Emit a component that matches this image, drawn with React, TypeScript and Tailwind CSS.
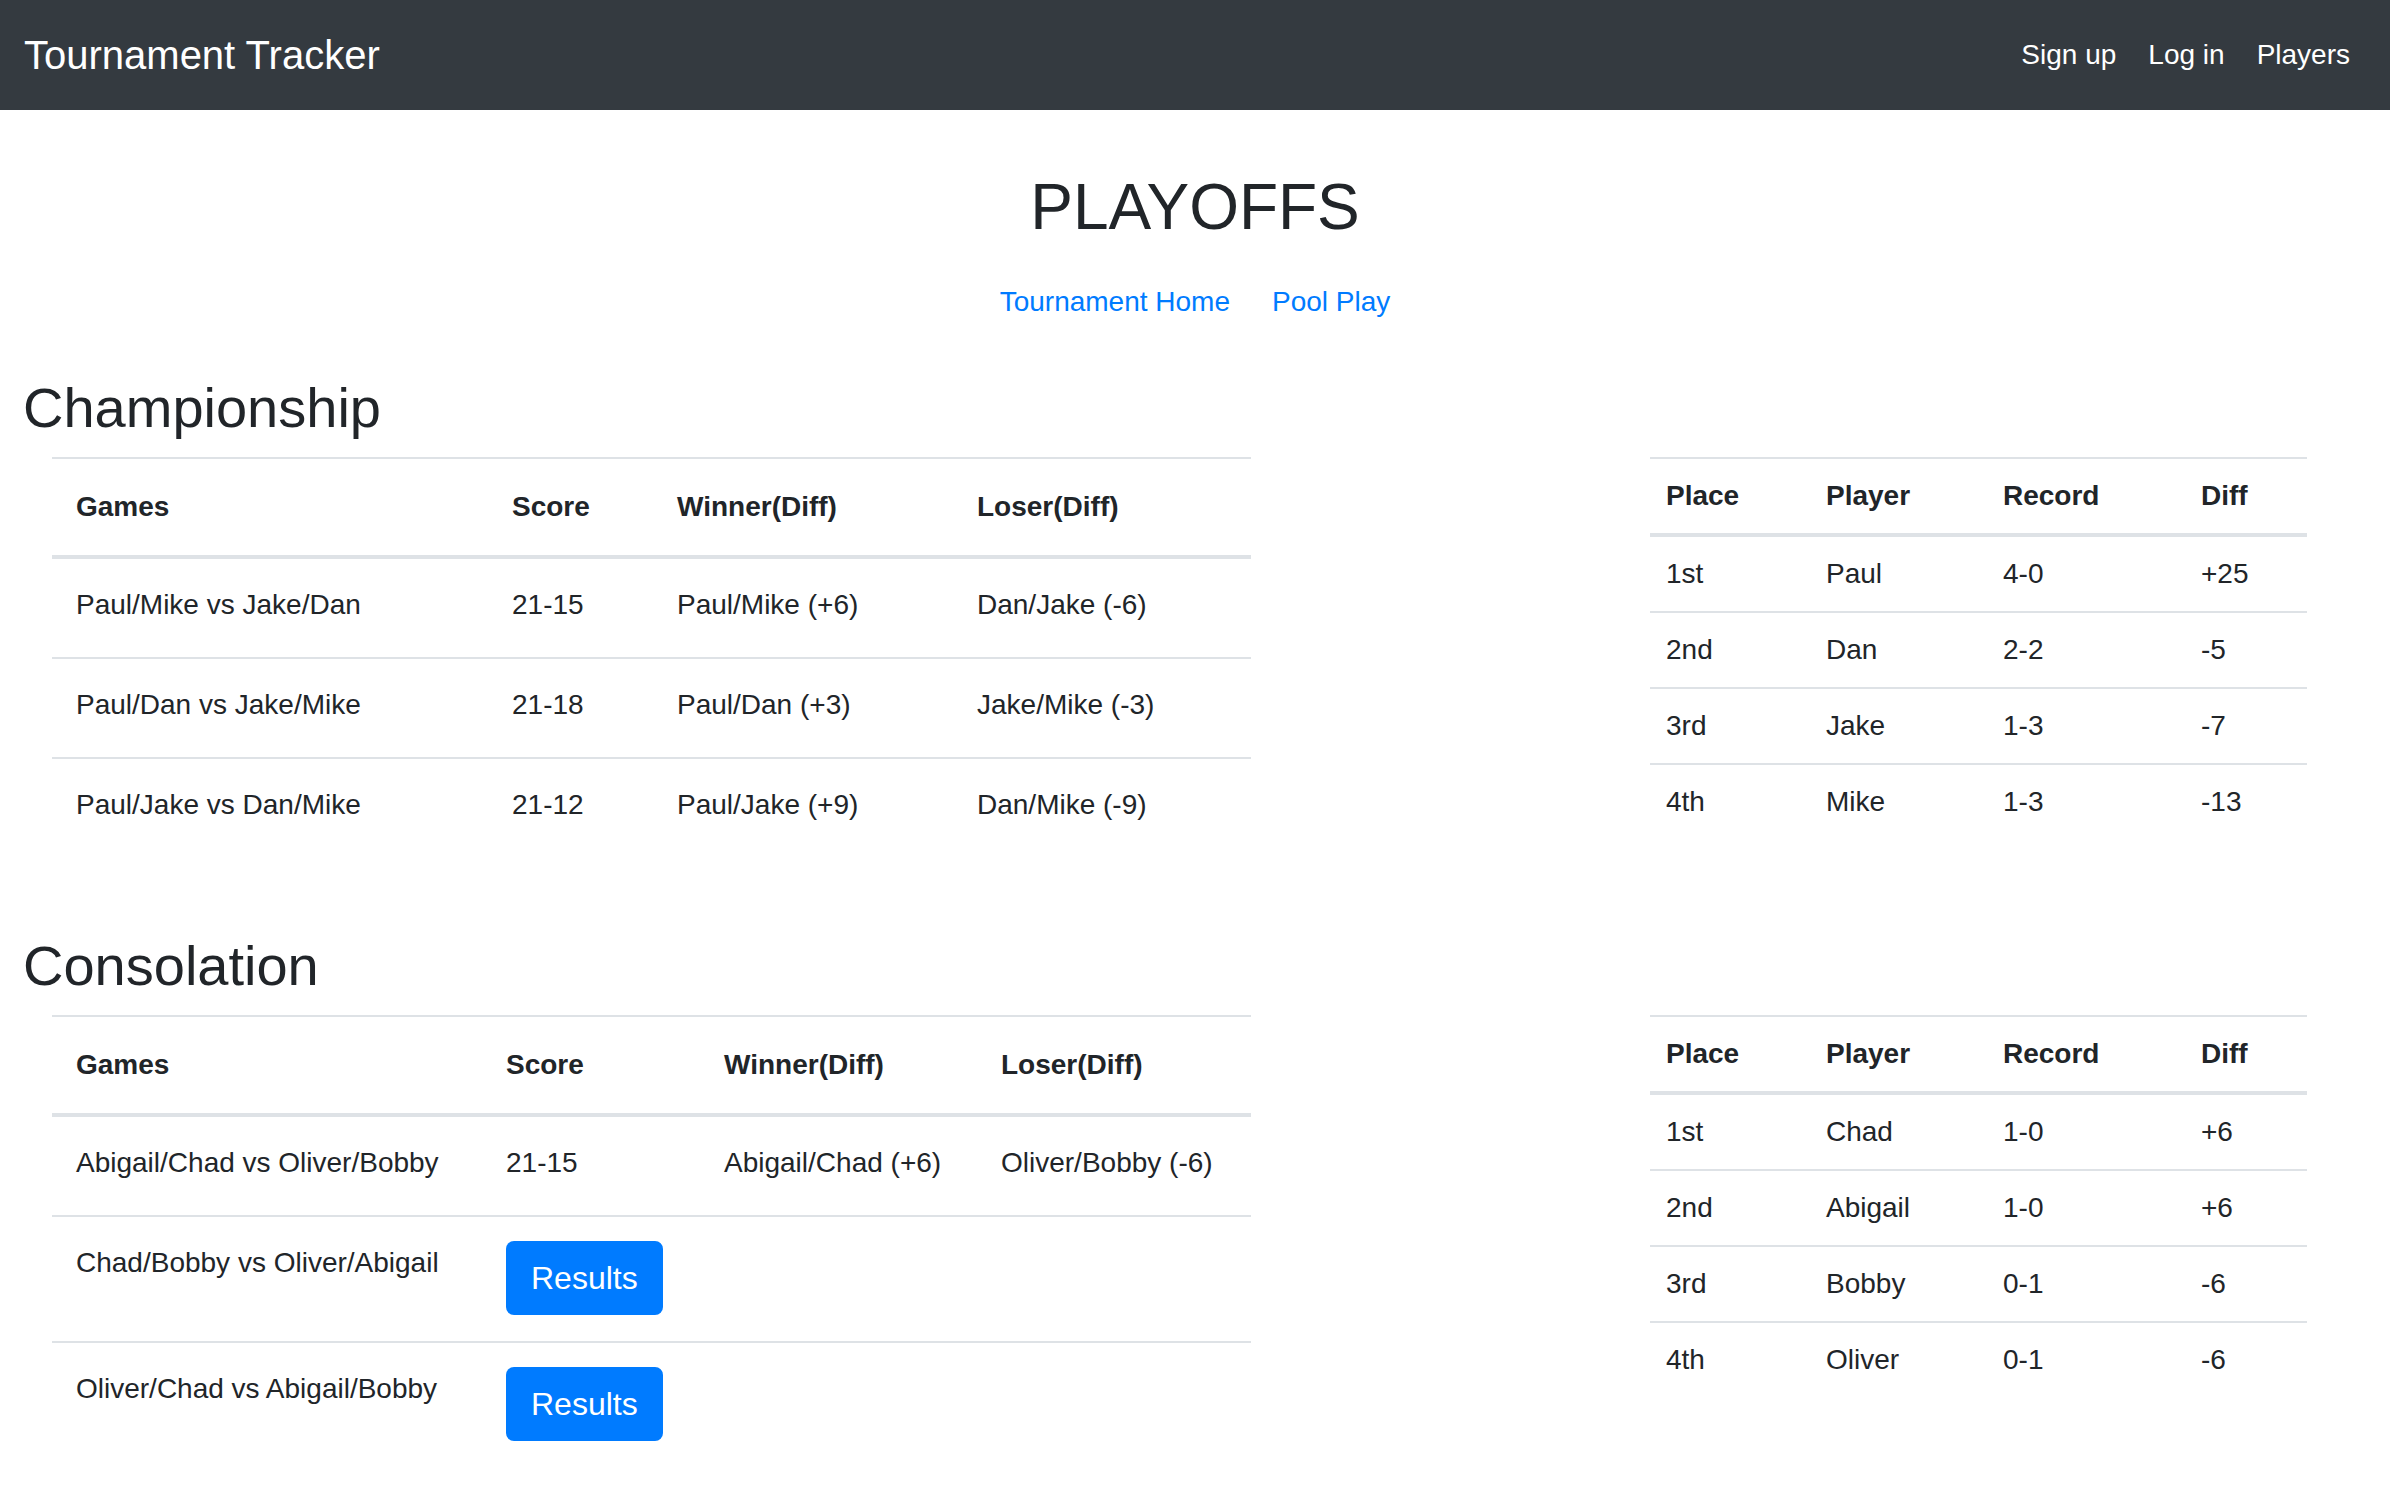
import React from "react";

type Game = { games: string; score?: string; winner?: string; loser?: string };
type Standing = { place: string; player: string; record: string; diff: string };

const championshipGames: Game[] = [
  { games: "Paul/Mike vs Jake/Dan", score: "21-15", winner: "Paul/Mike (+6)", loser: "Dan/Jake (-6)" },
  { games: "Paul/Dan vs Jake/Mike", score: "21-18", winner: "Paul/Dan (+3)", loser: "Jake/Mike (-3)" },
  { games: "Paul/Jake vs Dan/Mike", score: "21-12", winner: "Paul/Jake (+9)", loser: "Dan/Mike (-9)" },
];

const championshipStandings: Standing[] = [
  { place: "1st", player: "Paul", record: "4-0", diff: "+25" },
  { place: "2nd", player: "Dan", record: "2-2", diff: "-5" },
  { place: "3rd", player: "Jake", record: "1-3", diff: "-7" },
  { place: "4th", player: "Mike", record: "1-3", diff: "-13" },
];

const consolationGames: Game[] = [
  { games: "Abigail/Chad vs Oliver/Bobby", score: "21-15", winner: "Abigail/Chad (+6)", loser: "Oliver/Bobby (-6)" },
  { games: "Chad/Bobby vs Oliver/Abigail" },
  { games: "Oliver/Chad vs Abigail/Bobby" },
];

const consolationStandings: Standing[] = [
  { place: "1st", player: "Chad", record: "1-0", diff: "+6" },
  { place: "2nd", player: "Abigail", record: "1-0", diff: "+6" },
  { place: "3rd", player: "Bobby", record: "0-1", diff: "-6" },
  { place: "4th", player: "Oliver", record: "0-1", diff: "-6" },
];

const GamesTable = ({ rows, widths }: { rows: Game[]; widths: string[] }) => {
  const th = "text-left font-bold align-top px-[24px] py-[24px] leading-[48px] border-t-2 border-b-4 border-[#dee2e6]";
  const td = "align-top px-[24px] pt-[22px] pb-[28px] leading-[48px] border-t-2 border-[#dee2e6]";
  return (
    <table className="table-fixed w-[1199px] text-[28px]">
      <thead>
        <tr>
          <th className={`${th} ${widths[0]}`}>Games</th>
          <th className={`${th} ${widths[1]}`}>Score</th>
          <th className={`${th} ${widths[2]}`}>Winner(Diff)</th>
          <th className={`${th} ${widths[3]}`}>Loser(Diff)</th>
        </tr>
      </thead>
      <tbody>
        {rows.map((r, i) => (
          <tr key={i} className={i === 0 ? "[&>td]:border-t-0" : ""}>
            <td className={td}>{r.games}</td>
            {r.score ? (
              <>
                <td className={td}>{r.score}</td>
                <td className={td}>{r.winner}</td>
                <td className={td}>{r.loser}</td>
              </>
            ) : (
              <>
                <td className={td}>
                  <button className="mt-[2px] -mb-[2px] bg-[#007bff] text-white text-[32px] leading-[48px] px-[25px] py-[13px] rounded-[8px]">
                    Results
                  </button>
                </td>
                <td className={td}></td>
                <td className={td}></td>
              </>
            )}
          </tr>
        ))}
      </tbody>
    </table>
  );
};

const StandingsTable = ({ rows }: { rows: Standing[] }) => {
  const th = "text-left font-bold px-[16px] py-[13px] leading-[48px] border-t-2 border-b-4 border-[#dee2e6]";
  const td = "px-[16px] py-[13px] leading-[48px] border-t-2 border-[#dee2e6]";
  return (
    <table className="table-fixed w-[657px] text-[28px]">
      <thead>
        <tr>
          <th className={`${th} w-[160px]`}>Place</th>
          <th className={`${th} w-[177px]`}>Player</th>
          <th className={`${th} w-[198px]`}>Record</th>
          <th className={`${th} w-[122px]`}>Diff</th>
        </tr>
      </thead>
      <tbody>
        {rows.map((r, i) => (
          <tr key={i} className={i === 0 ? "[&>td]:border-t-0" : ""}>
            <td className={td}>{r.place}</td>
            <td className={td}>{r.player}</td>
            <td className={td}>{r.record}</td>
            <td className={td}>{r.diff}</td>
          </tr>
        ))}
      </tbody>
    </table>
  );
};

const App = () => {
  return (
    <div className="min-h-screen bg-white text-[#212529] font-['Liberation_Sans',Arial,sans-serif]">
      {/* Navbar */}
      <nav className="h-[110px] bg-[#343a40] flex items-center justify-between px-[24px]">
        <a className="text-white text-[40px] leading-none">Tournament Tracker</a>
        <div className="flex text-white text-[28px]">
          <a className="px-[16px]">Sign up</a>
          <a className="px-[16px]">Log in</a>
          <a className="px-[16px]">Players</a>
        </div>
      </nav>

      <h1 className="text-center text-[64px] leading-[77px] font-normal mt-[59px]">PLAYOFFS</h1>
      <div className="flex justify-center gap-[42px] text-[28px] leading-[48px] mt-[32px] text-[#007bff]">
        <a>Tournament Home</a>
        <a>Pool Play</a>
      </div>

      {/* Championship */}
      <h2 className="pl-[23px] text-[56px] leading-[67px] mt-[48px]">Championship</h2>
      <div className="flex items-start mt-[16px]">
        <div className="ml-[52px]">
          <GamesTable rows={championshipGames} widths={["w-[436px]", "w-[165px]", "w-[300px]", "w-[298px]"]} />
        </div>
        <div className="ml-auto mr-[83px]">
          <StandingsTable rows={championshipStandings} />
        </div>
      </div>

      {/* Consolation */}
      <h2 className="pl-[23px] text-[56px] leading-[67px] mt-[75px]">Consolation</h2>
      <div className="flex items-start mt-[16px] pb-[40px]">
        <div className="ml-[52px]">
          <GamesTable rows={consolationGames} widths={["w-[430px]", "w-[218px]", "w-[277px]", "w-[274px]"]} />
        </div>
        <div className="ml-auto mr-[83px]">
          <StandingsTable rows={consolationStandings} />
        </div>
      </div>
    </div>
  );
};

export default App;
